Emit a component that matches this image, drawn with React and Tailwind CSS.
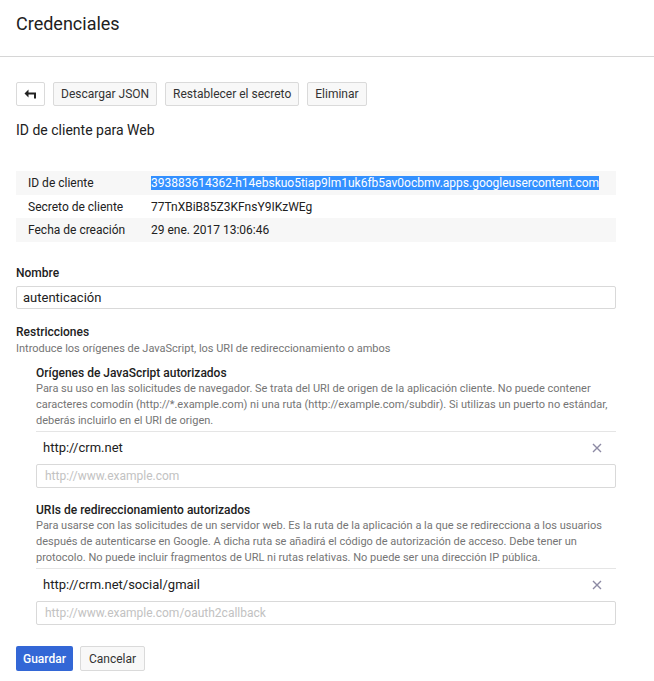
import React from 'react';

function XIcon() {
  return (
    <svg width="10" height="10" viewBox="0 0 10 10" className="text-[#8d8aa4]">
      <path d="M1 1L9 9M9 1L1 9" stroke="currentColor" strokeWidth="1.4" />
    </svg>
  );
}

function BackIcon() {
  return (
    <svg width="13" height="10" viewBox="0 0 13 10">
      <path d="M4.5 0.5L0.5 4.5L4.5 8.5Z" fill="#222" />
      <path d="M3.5 4.5H11V9.5" stroke="#222" strokeWidth="2" fill="none" />
    </svg>
  );
}

function UriSection({ title, lines, value, placeholder }) {
  return (
    <div className="ml-5">
      <div className="text-[12px] font-medium text-[#212121] leading-4">{title}</div>
      <div className="text-[11px] text-[#757575] leading-4 whitespace-nowrap">
        {lines.map((l, i) => <div key={i}>{l}</div>)}
      </div>
      <div className="border-t border-[#e5e5e5] mt-[2px] h-[33px] flex items-center justify-between pl-[7px] pr-[14px]">
        <span className="text-[13px] text-[#212121]">{value}</span>
        <XIcon />
      </div>
      <div className="h-[24px] border border-[#d9d9d9] rounded-[2px] flex items-center px-[8px] text-[12px] text-[#c2c2c2]">
        {placeholder}
      </div>
    </div>
  );
}

export default function App() {
  return (
    <div className="bg-white w-[654px] min-h-[681px] text-[#212121]" style={{ fontFamily: 'Roboto, "Liberation Sans", sans-serif' }}>
      <div className="h-[57px] border-b border-[#d6d6d6] px-4 pt-[13px]">
        <h1 className="text-[18px] leading-[22px] text-[#212121]">Credenciales</h1>
      </div>

      <div className="px-4 w-[632px]">
        <div className="flex gap-2 mt-[25px] text-[12px]">
          <button className="h-[24px] w-[29px] border border-[#dadada] rounded-[2px] bg-white flex items-center justify-center">
            <BackIcon />
          </button>
          <button className="h-[24px] px-[7px] border border-[#dadada] rounded-[2px] bg-[#f8f8f8] text-[#333]">Descargar JSON</button>
          <button className="h-[24px] px-[7px] border border-[#dadada] rounded-[2px] bg-[#f8f8f8] text-[#333]">Restablecer el secreto</button>
          <button className="h-[24px] px-[7px] border border-[#dadada] rounded-[2px] bg-[#f8f8f8] text-[#333]">Eliminar</button>
        </div>

        <div className="text-[14px] mt-[14px] leading-5">ID de cliente para Web</div>

        <div className="mt-[31px] text-[12px]">
          <div className="flex items-center h-[24px] bg-[#f7f7f7]">
            <div className="w-[135px] pl-3">ID de cliente</div>
            <div>
              <span className="bg-[#3390ff] text-white">393883614362-h14ebskuo5tiap9lm1uk6fb5av0ocbmv.apps.googleusercontent.com</span>
            </div>
          </div>
          <div className="flex items-center h-[23px]">
            <div className="w-[135px] pl-3">Secreto de cliente</div>
            <div>77TnXBiB85Z3KFnsY9IKzWEg</div>
          </div>
          <div className="flex items-center h-[24px] bg-[#f7f7f7]">
            <div className="w-[135px] pl-3">Fecha de creación</div>
            <div>29 ene. 2017 13:06:46</div>
          </div>
        </div>

        <div className="mt-[23px] text-[12px] font-medium leading-4">Nombre</div>
        <div className="mt-[5px] h-[23px] border border-[#d9d9d9] rounded-[2px] flex items-center px-[6px] text-[13px]">
          autenticación
        </div>

        <div className="mt-[15px] text-[12px] font-medium leading-4">Restricciones</div>
        <div className="text-[11px] text-[#757575] leading-4 mt-px">Introduce los orígenes de JavaScript, los URI de redireccionamiento o ambos</div>

        <div className="mt-[8px]">
          <UriSection
            title="Orígenes de JavaScript autorizados"
            lines={[
              'Para su uso en las solicitudes de navegador. Se trata del URI de origen de la aplicación cliente. No puede contener',
              'caracteres comodín (http://*.example.com) ni una ruta (http://example.com/subdir). Si utilizas un puerto no estándar,',
              'deberás incluirlo en el URI de origen.',
            ]}
            value="http://crm.net"
            placeholder="http://www.example.com"
          />
        </div>

        <div className="mt-[14px]">
          <UriSection
            title="URIs de redireccionamiento autorizados"
            lines={[
              'Para usarse con las solicitudes de un servidor web. Es la ruta de la aplicación a la que se redirecciona a los usuarios',
              'después de autenticarse en Google. A dicha ruta se añadirá el código de autorización de acceso. Debe tener un',
              'protocolo. No puede incluir fragmentos de URL ni rutas relativas. No puede ser una dirección IP pública.',
            ]}
            value="http://crm.net/social/gmail"
            placeholder="http://www.example.com/oauth2callback"
          />
        </div>

        <div className="flex gap-[7px] mt-[21px] text-[12px]">
          <button className="h-[25px] px-[7px] rounded-[2px] bg-[#3367d6] text-white font-medium">Guardar</button>
          <button className="h-[25px] px-[8px] border border-[#dadada] rounded-[2px] bg-[#f8f8f8] text-[#333]">Cancelar</button>
        </div>
      </div>
    </div>
  );
}
